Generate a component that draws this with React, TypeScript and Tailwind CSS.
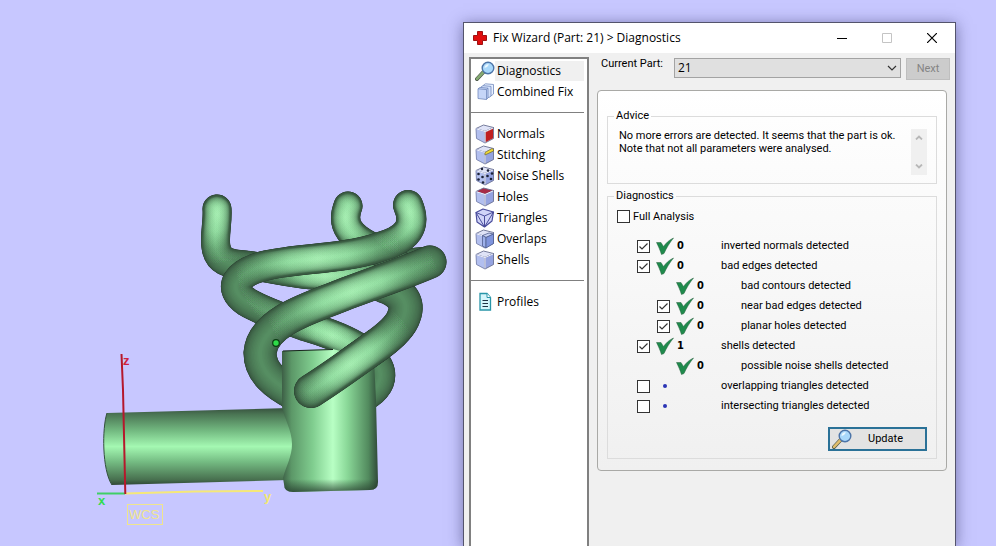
import { useState } from "react";
import type { ReactNode } from "react";

const UI_FONT = "font-['Segoe_UI','Open_Sans',sans-serif]";

type CubeKind = "normals" | "stitching" | "noise" | "holes" | "triangles" | "overlaps" | "shells";

const TUBE_STEPS = 16;

function mix(a: number[], b: number[], t: number) {
  const c = a.map((v, i) => Math.round(v + (b[i] - v) * t));
  return `rgb(${c[0]},${c[1]},${c[2]})`;
}

// Stacked strokes, dark on the rim and lighter toward the centre line
function Tube({ d, width, glows, clip }: { d: string; width: number; glows: string[]; clip?: string }) {
  const steps = Array.from({ length: TUBE_STEPS }, (_, i) => i / (TUBE_STEPS - 1));
  return (
    <g fill="none" strokeLinecap="round" strokeLinejoin="round" clipPath={clip}>
      {steps.map((t) => (
        <path key={t} d={d} strokeWidth={width * Math.cos(t * 1.45)} stroke={mix([40, 58, 46], [86, 142, 98], Math.pow(t, 0.65))} />
      ))}
      {glows.map((glow) =>
        steps.slice(4).map((t) => (
          <path key={glow + t} d={d} strokeWidth={width * 0.92 * Math.cos(t * 1.45)} stroke={`url(#${glow})`} strokeOpacity={0.14} />
        ))
      )}
    </g>
  );
}

function Glow({ id, cx, cy, r }: { id: string; cx: number; cy: number; r: number }) {
  return (
    <radialGradient id={id} gradientUnits="userSpaceOnUse" cx={cx} cy={cy} r={r}>
      <stop offset="0" stopColor="#b4ffc0" />
      <stop offset="0.35" stopColor="#a4f4b3" stopOpacity="0.8" />
      <stop offset="0.7" stopColor="#8cdc9c" stopOpacity="0.3" />
      <stop offset="1" stopColor="#8cdc9c" stopOpacity="0" />
    </radialGradient>
  );
}

const FRONT_TUBE = "M384 286C402 292 409 303 404 316C401 326 390 336 376 346C356 360 335 376 311 391";

function PartModel() {
  return (
    <svg viewBox="0 0 463 546" className="h-[546px] w-[463px] shrink-0" role="img" aria-label="Part 21">
      <defs>
        <Glow id="glowA" cx={217} cy={214} r={50} />
        <Glow id="glowABack" cx={325} cy={276} r={60} />
        <Glow id="glowD" cx={346} cy={217} r={50} />
        <Glow id="glowB" cx={318} cy={259} r={85} />
        <Glow id="glowTip" cx={409} cy={212} r={45} />
        <Glow id="glowBLow" cx={332} cy={337} r={48} />
        <Glow id="glowC" cx={352} cy={292} r={90} />
        <Glow id="glowE" cx={350} cy={364} r={70} />
        <linearGradient id="armShade" x1="0" y1="0" x2="0" y2="1">
          <stop offset="0" stopColor="#37513e" />
          <stop offset="0.08" stopColor="#4a7453" />
          <stop offset="0.3" stopColor="#74bb82" />
          <stop offset="0.5" stopColor="#a4f8b2" />
          <stop offset="0.7" stopColor="#74bb82" />
          <stop offset="0.93" stopColor="#48704f" />
          <stop offset="1" stopColor="#2f4636" />
        </linearGradient>
        <linearGradient id="bodyShade" x1="0" y1="0" x2="1" y2="0">
          <stop offset="0" stopColor="#3d5f46" />
          <stop offset="0.1" stopColor="#5c9868" />
          <stop offset="0.32" stopColor="#80cd8f" />
          <stop offset="0.53" stopColor="#b8ffc4" />
          <stop offset="0.68" stopColor="#8ad898" />
          <stop offset="0.9" stopColor="#528a5e" />
          <stop offset="1" stopColor="#2f4a38" />
        </linearGradient>
        <linearGradient id="bodyFoot" x1="0" y1="0" x2="0" y2="1">
          <stop offset="0.86" stopColor="#24382b" stopOpacity="0" />
          <stop offset="1" stopColor="#24382b" stopOpacity="0.75" />
        </linearGradient>
        <clipPath id="frontOnly">
          <path d="M286 330H440V430H286Z" />
        </clipPath>
      </defs>

      <Tube d="M217 209C218 222 214 236 216 247C218 261 228 264 245 265C275 268 312 280 345 274C385 268 405 262 430 261" width={29} glows={["glowA", "glowABack"]} />
      <Tube d="M348 206C341 224 350 236 370 246L396 262" width={29} glows={["glowD"]} />
      <Tube
        d="M408 205C417 226 408 239 380 247C345 259 300 258 268 265C236 272 226 288 247 302C262 311 285 319 305 326C340 336 376 352 380 372C382 384 372 394 360 398"
        width={30}
        glows={["glowTip", "glowB", "glowBLow"]}
      />
      <Tube d={FRONT_TUBE} width={34} glows={["glowE"]} />
      <Tube d="M430 262C400 275 365 286 335 298C300 311 262 325 260 353C260 372 275 384 296 395" width={33} glows={["glowC"]} />

      <path d="M107 413L288 408Q300 445 288 480L112 485C102 470 102 428 107 413Z" fill="url(#armShade)" />
      <path d="M107 413C102 428 102 470 112 485" fill="none" stroke="#33503c" />
      <path
        id="body"
        d="M282 351L333 349L374 360L376 400L378 482Q378 490 370 490L293 492Q284 492 284 484L283 478C286 466 292 457 292 444C292 430 284 418 282 407Z"
        fill="url(#bodyShade)"
      />
      <path d="M283 478Q286 468 292 444L376 400L378 482Q378 490 370 490L293 492Q284 492 284 484Z" fill="url(#bodyFoot)" />
      <path d="M283 351L333 349.500" stroke="#18251c" />
      <Tube d={FRONT_TUBE} width={34} glows={["glowE"]} clip="url(#frontOnly)" />

      <circle cx="276" cy="343" r="3.300" fill="#2edc48" stroke="#0c3c14" strokeWidth="1.200" />

      <g fill="none" strokeWidth="2">
        <path d="M97 493.500H125" stroke="#3fce66" />
        <path d="M125 493.500L195 491.500L263 491" stroke="#f5e878" />
        <path d="M121.500 354L123 390L125.300 494" stroke="#b5182c" />
      </g>
      <g fontFamily="Liberation Sans, sans-serif" fontSize="13" fontWeight="bold">
        <text x="98" y="505" fill="#2fdc50">x</text>
        <text x="123" y="365" fill="#cf2240">z</text>
        <text x="264" y="501" fill="#f3e770">y</text>
      </g>
      <rect x="127.500" y="504.500" width="35" height="20" fill="none" stroke="#efe58c" />
      <text x="129" y="519" fontFamily="Liberation Sans, sans-serif" fontSize="13" fill="#efe58c">WCS</text>
    </svg>
  );
}

function Magnifier({ handle }: { handle: string }) {
  return (
    <svg viewBox="0 0 20 20" className="size-5 shrink-0" aria-hidden="true">
      <path d="M2 18L8.500 11" stroke="#4a5548" strokeWidth="4" strokeLinecap="round" />
      <path d="M2 17.800L8.500 11" stroke={handle} strokeWidth="2.600" strokeLinecap="round" />
      <circle cx="13" cy="7" r="5.800" fill="#a9d8fb" stroke="#4c74a8" strokeWidth="1.400" />
      <path d="M9.500 7A3.500 3.500 0 0 1 14 3.500Q13 6 9.500 7Z" fill="#ebf8ff" />
    </svg>
  );
}

function CombinedIcon() {
  return (
    <svg viewBox="0 0 20 20" className="size-5 shrink-0" aria-hidden="true" strokeLinejoin="round" stroke="#7189bd" strokeWidth="0.800">
      <path d="M8.500 3L10.500 1.800L18.500 2.500V12L16 14L8.500 13Z" fill="#e6efff" />
      <path d="M6 5L8 3.600L16 4.400V14L14 15.500L6 14.500Z" fill="#d2e0fb" />
      <path d="M3 6.800L5 5.400L13 6.200V16L11.500 17.500L3 16.500Z" fill="#c6d6f8" />
      <path d="M3 6.800L11.500 7.600V17.500M11.500 7.600L13 6.200" fill="none" />
    </svg>
  );
}

function ProfilesIcon() {
  return (
    <svg viewBox="0 0 20 20" className="size-5 shrink-0" aria-hidden="true">
      <path d="M5 1.500H12L15.500 5.500V18H5Z" fill="#d5f5fb" stroke="#2895a8" strokeWidth="1.300" />
      <path d="M12 1.500V5.500H15.500" fill="#fff" stroke="#2895a8" />
      <path d="M7.500 8.500H13M7.500 11.500H13M7.500 14.500H13" stroke="#1f3344" strokeWidth="1.200" />
    </svg>
  );
}

function TrianglesIcon() {
  return (
    <svg viewBox="0 0 20 20" className="size-5 shrink-0" aria-hidden="true" strokeLinejoin="round" stroke="#4a4d9c">
      <path d="M1 4.500L8 1L18.500 4L17 13L9.500 19L2 14Z" fill="#d0d4f8" strokeWidth="1.200" />
      <path d="M1 4.500L9.500 8L18.500 4M9.500 8V19M1 4.500L9.500 19L18.500 4" fill="none" />
    </svg>
  );
}

function CubeIcon({ kind }: { kind: CubeKind }) {
  if (kind === "triangles") return <TrianglesIcon />;
  return (
    <svg viewBox="0 0 20 20" className="size-5 shrink-0" aria-hidden="true" strokeLinejoin="round">
      <path d="M1 4.500L8.500 1L18.500 3.500L10 7.500Z" fill={kind === "holes" ? "#a72b47" : "#dfe3f7"} stroke="#6a7092" strokeWidth="0.900" />
      <path d="M1 4.500L10 7.500V19L1.500 14.500Z" fill="#b2bfef" stroke="#7680ab" strokeWidth="0.900" />
      <path d="M10 7.500L18.500 3.500V14.500L10 19Z" fill={kind === "normals" ? "#d8b8c4" : "#95a3e0"} stroke="#6a7092" strokeWidth="0.900" />
      <path d="M1.500 4.800L10 7.500L18 4M10 7.500V18.500" fill="none" stroke="#f2f4ff" />
      {kind === "normals" && <path d="M10.800 8.200L18 4.800V14.200L10.800 18Z" fill="#c01f20" />}
      {kind === "stitching" && <path d="M10 7.500L17 3.500L18.500 4.500V6L10 10Z" fill="#f2da35" stroke="#6b6530" strokeWidth="0.700" />}
      {kind === "noise" && (
        <g fill="#1b2135">
          <circle cx="3.500" cy="8" r="1.300" />
          <circle cx="7.500" cy="11" r="1.300" />
          <circle cx="3.500" cy="13.500" r="1.300" />
          <circle cx="8" cy="16.500" r="1.300" />
          <circle cx="7" cy="3" r="1.200" />
          <circle cx="13" cy="4.500" r="1.300" />
          <circle cx="12.500" cy="10" r="1.300" />
          <circle cx="17" cy="7.500" r="1.300" />
          <circle cx="16" cy="13" r="1.300" />
        </g>
      )}
      {kind === "overlaps" && (
        <g stroke="#52608f" strokeWidth="0.800">
          <path d="M7.500 6.500L14 4L18.500 5L11 8.500Z" fill="#c9d3f5" />
          <path d="M7.500 6.500L11 8.500V19L7.500 17Z" fill="#9db0ea" />
          <path d="M11 8.500L18.500 5V14.500L11 19Z" fill="#7f94dc" />
        </g>
      )}
    </svg>
  );
}

function GreenCheck() {
  return (
    <svg viewBox="0 0 18 18" className="size-[18px] shrink-0" aria-label="OK" role="img">
      <path d="M0.500 5.500L5 5.500L7.500 9.500C10 6 13 3 17.500 1C13.500 6 10.500 11 8 16.500L5.500 17.500C4 13 2.500 9.500 0.500 5.500Z" fill="#1f8a4c" stroke="#28623f" strokeWidth="0.500" />
    </svg>
  );
}

const NAV: { label: string; icon: ReactNode; gapBefore?: boolean }[] = [
  { label: "Diagnostics", icon: <Magnifier handle="#85aa72" /> },
  { label: "Combined Fix", icon: <CombinedIcon /> },
  { label: "Normals", icon: <CubeIcon kind="normals" />, gapBefore: true },
  { label: "Stitching", icon: <CubeIcon kind="stitching" /> },
  { label: "Noise Shells", icon: <CubeIcon kind="noise" /> },
  { label: "Holes", icon: <CubeIcon kind="holes" /> },
  { label: "Triangles", icon: <CubeIcon kind="triangles" /> },
  { label: "Overlaps", icon: <CubeIcon kind="overlaps" /> },
  { label: "Shells", icon: <CubeIcon kind="shells" /> },
  { label: "Profiles", icon: <ProfilesIcon />, gapBefore: true },
];

const CHECKS: { label: string; count?: number; box?: boolean; checked?: boolean; nested?: boolean }[] = [
  { label: "inverted normals detected", count: 0, box: true, checked: true },
  { label: "bad edges detected", count: 0, box: true, checked: true },
  { label: "bad contours detected", count: 0, nested: true },
  { label: "near bad edges detected", count: 0, box: true, checked: true, nested: true },
  { label: "planar holes detected", count: 0, box: true, checked: true, nested: true },
  { label: "shells detected", count: 1, box: true, checked: true },
  { label: "possible noise shells detected", count: 0, nested: true },
  { label: "overlapping triangles detected", box: true },
  { label: "intersecting triangles detected", box: true },
];

function CheckBox({ id, defaultChecked }: { id: string; defaultChecked?: boolean }) {
  return (
    <span className="grid size-[13px] shrink-0">
      <input id={id} type="checkbox" defaultChecked={defaultChecked} className="peer col-start-1 row-start-1 size-[13px] appearance-none border border-[#333] bg-white" />
      <svg viewBox="0 0 13 13" className="pointer-events-none invisible col-start-1 row-start-1 size-[13px] peer-checked:visible" aria-hidden="true">
        <path d="M2.500 6.500L5 9L10.500 3.500" fill="none" stroke="#333" strokeWidth="1.200" />
      </svg>
    </span>
  );
}

function Sidebar() {
  const [active, setActive] = useState("Diagnostics");

  return (
    <nav className={`w-[120px] shrink-0 border-2 border-b-0 border-[#808080] bg-white pr-[3px] pt-px text-[12px] ${UI_FONT}`}>
      {NAV.map((item) => (
        <div key={item.label}>
          {item.gapBefore && (
            <div className="flex h-[21px] items-center">
              <hr className="w-full border-[#808080]" />
            </div>
          )}
          <button type="button" onClick={() => setActive(item.label)} className="flex h-[21px] w-full items-center pl-1 text-left">
            {item.icon}
            <span className={`h-5 flex-1 whitespace-nowrap pl-[2px] leading-5 ${active === item.label ? "bg-[#f0f0f0]" : ""}`}>{item.label}</span>
          </button>
        </div>
      ))}
    </nav>
  );
}

function TitleBar() {
  return (
    <header className={`flex h-[30px] items-center bg-white pl-[9px] pr-px text-[12px] ${UI_FONT}`}>
      <svg viewBox="0 0 14 14" className="size-[14px]" aria-hidden="true">
        <path d="M4.500 0.500H9.500V4.500H13.500V9.500H9.500V13.500H4.500V9.500H0.500V4.500H4.500Z" fill="#e00d0d" stroke="#a01212" />
      </svg>
      <h1 className="flex-1 pl-[6px]">Fix Wizard (Part: 21) &gt; Diagnostics</h1>
      <button type="button" aria-label="Minimize" className="flex h-full w-[45px] items-center justify-center">
        <svg viewBox="0 0 10 10" className="size-[10px]"><path d="M0 5.500H10" stroke="#000" /></svg>
      </button>
      <button type="button" aria-label="Maximize" disabled className="flex h-full w-[45px] items-center justify-center">
        <svg viewBox="0 0 10 10" className="size-[10px]"><path d="M0.500 0.500H9.500V9.500H0.500Z" fill="none" stroke="#c4c4c4" /></svg>
      </button>
      <button type="button" aria-label="Close" className="flex h-full w-[45px] items-center justify-center">
        <svg viewBox="0 0 10 10" className="size-[10px]"><path d="M0 0L10 10M10 0L0 10" stroke="#000" strokeWidth="1.200" /></svg>
      </button>
    </header>
  );
}

export default function App() {
  return (
    <div className="flex min-h-screen justify-between overflow-hidden bg-[#c7c7ff] pr-10 font-['Tahoma','Roboto',sans-serif] text-[11px] text-black">
      <PartModel />

      <section className="mt-[22px] flex w-[493px] shrink-0 flex-col border border-b-0 border-[#54546c] bg-[#f0f0f0] shadow-[0_2px_14px_rgba(30,30,80,0.5)]">
        <TitleBar />
        <div className="flex flex-1 pl-[5px] pr-[5px] pt-1">
          <Sidebar />

          <main className="flex-1 pl-2">
            <div className="flex items-start pt-px">
              <label htmlFor="part" className="w-[77px] pl-1 text-[11px] leading-[12px]">Current Part:</label>
              <span className="mr-[5px] grid flex-1">
                <select id="part" defaultValue="21" className={`col-start-1 row-start-1 h-5 appearance-none border border-[#a3a3a3] bg-[#e0e0e0] pl-[3px] text-[12px] leading-4 ${UI_FONT}`}>
                  <option>21</option>
                </select>
                <svg viewBox="0 0 10 6" className="pointer-events-none col-start-1 row-start-1 mr-1 h-[6px] w-[10px] self-center justify-self-end" aria-hidden="true">
                  <path d="M1 1L5 5L9 1" fill="none" stroke="#333" strokeWidth="1.200" />
                </svg>
              </span>
              <button type="button" disabled className="h-[22px] w-11 border border-[#bfbfbf] bg-[#ccc] text-[11px] text-[#848484]">Next</button>
            </div>

            <div className="mr-[3px] mt-[10px] rounded border border-[#a9a9a6] bg-linear-to-b from-white to-[#f0f0f0] px-[9px] pb-[11px] pt-[18px]">
              <fieldset className="border border-[#dcdcdc] pb-[7px] pl-[11px] pr-[9px]">
                <legend className="-ml-[5px] px-[2px] leading-[14px]">Advice</legend>
                <div className="flex h-[53px] items-start justify-between pt-[6px]">
                  <p className="whitespace-nowrap leading-[13px]">
                    No more errors are detected. It seems that the part is ok.
                    <br />
                    Note that not all parameters were analysed.
                  </p>
                  <div className="flex h-[46px] w-4 shrink-0 flex-col items-center justify-between bg-[#f0f0f0] py-[6px]">
                    <svg viewBox="0 0 8 5" className="h-[5px] w-2" aria-hidden="true"><path d="M1 4.500L4 1.500L7 4.500" fill="none" stroke="#b8b8b8" strokeWidth="1.800" /></svg>
                    <svg viewBox="0 0 8 5" className="h-[5px] w-2" aria-hidden="true"><path d="M1 0.500L4 3.500L7 0.500" fill="none" stroke="#b8b8b8" strokeWidth="1.800" /></svg>
                  </div>
                </div>
              </fieldset>

              <fieldset className="mt-[5px] border border-[#dcdcdc] pb-[7px] pl-[9px] pr-[9px]">
                <legend className="-ml-[3px] px-[2px] leading-[14px]">Diagnostics</legend>
                <div className="flex items-center gap-[3px] pt-[7px]">
                  <CheckBox id="full" />
                  <label htmlFor="full" className="leading-[13px]">Full Analysis</label>
                </div>

                <ul className="pt-[13px]">
                  {CHECKS.map((c, i) => (
                    <li key={c.label} className={`flex h-5 items-center ${c.nested ? "pl-10" : "pl-5"}`}>
                      {c.box ? <CheckBox id={`check-${i}`} defaultChecked={c.checked} /> : <span className="w-[13px]" />}
                      <span className="ml-[5px] flex w-5 justify-center">
                        {c.count === undefined ? <span className="size-1 rounded-full bg-[#2b35b5]" /> : <GreenCheck />}
                      </span>
                      <b className="w-[46px] pl-[2px] font-['Tahoma','DejaVu_Sans_Condensed',sans-serif]">{c.count}</b>
                      <label htmlFor={c.box ? `check-${i}` : undefined}>{c.label}</label>
                    </li>
                  ))}
                </ul>

                <div className="flex justify-end pt-[11px]">
                  <button type="button" className="flex h-6 w-[99px] items-center border-2 border-[#2a7197] bg-[#e3e3e3] pl-[2px] pr-[6px]">
                    <Magnifier handle="#e0bd6c" />
                    <span className="flex-1 text-center">Update</span>
                  </button>
                </div>
              </fieldset>
            </div>
          </main>
        </div>
      </section>
    </div>
  );
}
